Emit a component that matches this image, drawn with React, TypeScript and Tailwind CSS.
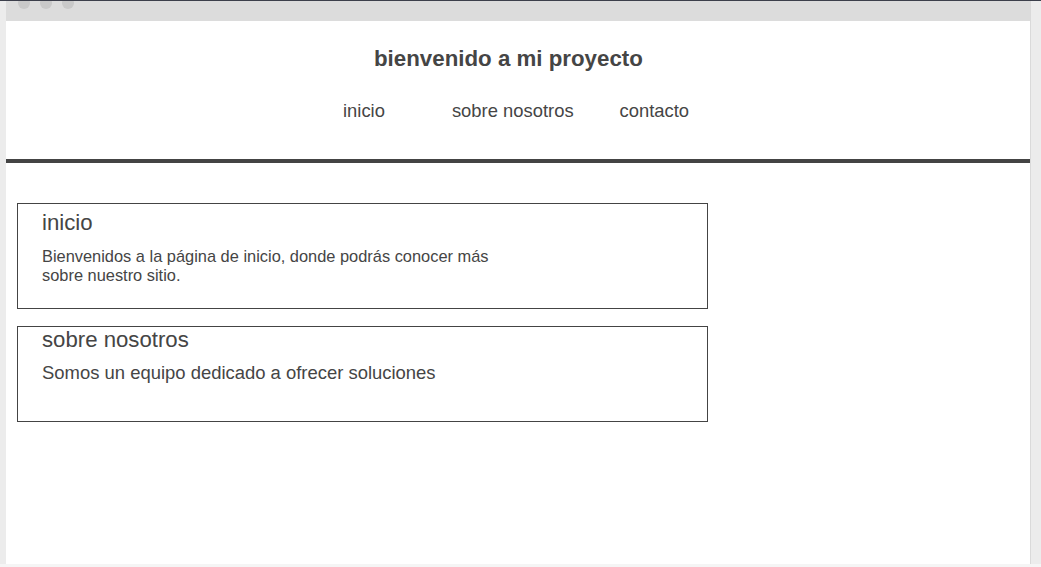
export default function App(){

const font={fontFamily:'"Liberation Sans", Arial, sans-serif'}

return(

<div className="w-[1041px] h-[567px] bg-[#ececec] flex flex-col overflow-hidden text-[#454545]" style={font}>

<div className="h-[1px] bg-[#3c3f4b] shrink-0"></div>

<div className="flex flex-1 min-h-0">

<div className="w-[6px] shrink-0 bg-[#ececec]"></div>

<main className="w-[1024px] shrink-0 bg-white flex flex-col">

<div className="h-[20px] bg-[#dcdcdc] flex items-start gap-[10px] pl-[12px] overflow-hidden shrink-0">
<span className="w-[12px] h-[12px] rounded-full bg-[#c9c9c9] -mt-[4px]"></span>
<span className="w-[12px] h-[12px] rounded-full bg-[#c9c9c9] -mt-[4px]"></span>
<span className="w-[12px] h-[12px] rounded-full bg-[#c9c9c9] -mt-[4px]"></span>
</div>

<header className="pt-[25px]">
<h1 className="pl-[368px] text-[22.3px] leading-[25px] font-bold">
bienvenido a mi proyecto
</h1>
<nav className="flex pl-[337px] mt-[29px] text-[18.4px] leading-[21px]">
<a>inicio</a>
<a className="ml-[67px]">sobre nosotros</a>
<a className="ml-[46px]">contacto</a>
</nav>
</header>

<div className="h-[4px] bg-[#444] mt-[38px]"></div>

<section className="px-[11px] pt-[40px] flex flex-col gap-[17px]">

<div className="w-[691px] h-[106px] border border-[#444] pl-[24px] pt-[6px]">
<h2 className="text-[22.2px] leading-[25px]">inicio</h2>
<p className="w-[470px] mt-[12px] text-[16.4px] leading-[19px]">
Bienvenidos a la página de inicio, donde podrás conocer más sobre nuestro sitio.
</p>
</div>

<div className="w-[691px] h-[96px] border border-[#444] pl-[24px]">
<h2 className="text-[22.2px] leading-[25px]">sobre nosotros</h2>
<p className="mt-[10px] text-[18.45px] leading-[21px]">
Somos un equipo dedicado a ofrecer soluciones
</p>
</div>

</section>

</main>

<div className="w-[11px] shrink-0 bg-[#ececec] border-l border-[#dadada]"></div>

</div>

<div className="h-[3px] bg-[#f5f5f5] shrink-0"></div>

</div>

)

}
